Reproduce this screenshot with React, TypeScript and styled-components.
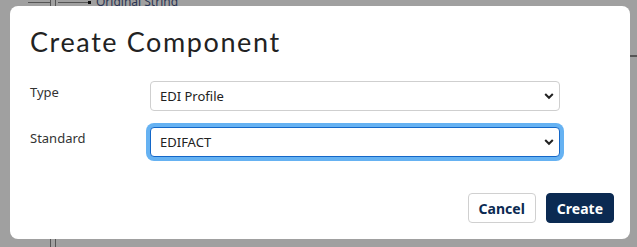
import styled, { createGlobalStyle } from 'styled-components';

const GlobalStyle = createGlobalStyle`
  * { box-sizing: border-box; }
  html, body { margin: 0; padding: 0; }
  body {
    width: 637px;
    height: 247px;
    overflow: hidden;
    background: #a0a0a0;
    font-family: "Noto Sans", "Open Sans", sans-serif;
  }
`;

const Screen = styled.div`
  position: relative;
  width: 637px;
  height: 247px;
  padding: 6px 7px 0 10px;
`;

// what is left of the page under the overlay
const Behind = styled.svg`
  position: absolute;
  inset: 0;
  width: 637px;
  height: 247px;
  pointer-events: none;
`;

const BehindLabel = styled.span`
  position: absolute;
  left: 96px;
  top: -7px;
  font-size: 12px;
  color: #2b3553;
`;

const Dialog = styled.div`
  position: relative;
  width: 620px;
  height: 233px;
  background: #fff;
  border-radius: 8px;
  display: flex;
  flex-direction: column;
  padding: 20px 16px 16px 20px;
`;

const Title = styled.h2`
  margin: 0 0 23px;
  font-family: "Lato", "Noto Sans", sans-serif;
  font-weight: 400;
  font-size: 27px;
  line-height: 32px;
  letter-spacing: 1.6px;
  color: #222;
`;

const Form = styled.div`
  display: grid;
  grid-template-columns: 120px 410px;
  row-gap: 16px;
  align-items: center;
`;

const Label = styled.label`
  font-size: 13px;
  color: #333;
  padding-bottom: 8px;
`;

const SelectWrap = styled.div`
  position: relative;
  height: 30px;
`;

const Select = styled.select<{ focused?: boolean }>`
  appearance: none;
  width: 100%;
  height: 30px;
  padding: 0 30px 0 9px;
  font-family: "Noto Sans", "Open Sans", sans-serif;
  font-size: 13px;
  color: #222;
  background: #fff;
  border: 1px solid ${p => (p.focused ? '#1467c8' : '#cfcfcf')};
  border-radius: 4px;
  box-shadow: ${p => (p.focused ? '0 0 0 4px #66b2f2' : 'none')};
  outline: none;
`;

const Chevron = styled.svg`
  position: absolute;
  right: 6px;
  top: 11px;
  width: 10px;
  height: 8px;
  pointer-events: none;
`;

const Footer = styled.div`
  margin-top: auto;
  display: flex;
  justify-content: flex-end;
  gap: 10px;
`;

const Button = styled.button<{ primary?: boolean }>`
  height: 30px;
  padding: 0 10px;
  border-radius: 4px;
  font-family: "Noto Sans", "Open Sans", sans-serif;
  font-weight: 700;
  font-size: 14px;
  color: ${p => (p.primary ? '#fff' : '#0b2a52')};
  background: ${p => (p.primary ? '#0b2a52' : '#fff')};
  border: 1px solid ${p => (p.primary ? '#0b2a52' : '#d0d0d0')};
`;

function Arrow() {
  return (
    <Chevron viewBox="0 0 10 8">
      <path d="M1.2 2 L5 5.8 L8.8 2" fill="none" stroke="#222" strokeWidth="2" />
    </Chevron>
  );
}

export default function App() {
  return (
    <>
      <GlobalStyle />
      <Screen>
        <Behind viewBox="0 0 637 247">
          <g fill="#555">
            <rect x={28} y={2} width={22} height={1} />
            <rect x={50} y={0} width={1} height={6} />
            <rect x={55} y={0} width={1} height={6} />
            <rect x={58} y={2} width={30} height={1} />
            <rect x={88} y={1} width={3} height={3} fill="#111" />
            <rect x={50} y={239} width={1} height={8} />
            <rect x={55} y={239} width={1} height={8} />
            <rect x={630} y={55} width={7} height={2} />
          </g>
        </Behind>
        <BehindLabel>Original String</BehindLabel>
        <Dialog>
          <Title>Create Component</Title>
          <Form>
            <Label>Type</Label>
            <SelectWrap>
              <Select defaultValue="edi">
                <option value="edi">EDI Profile</option>
              </Select>
              <Arrow />
            </SelectWrap>
            <Label>Standard</Label>
            <SelectWrap>
              <Select focused defaultValue="edifact">
                <option value="edifact">EDIFACT</option>
              </Select>
              <Arrow />
            </SelectWrap>
          </Form>
          <Footer>
            <Button>Cancel</Button>
            <Button primary>Create</Button>
          </Footer>
        </Dialog>
      </Screen>
    </>
  );
}
